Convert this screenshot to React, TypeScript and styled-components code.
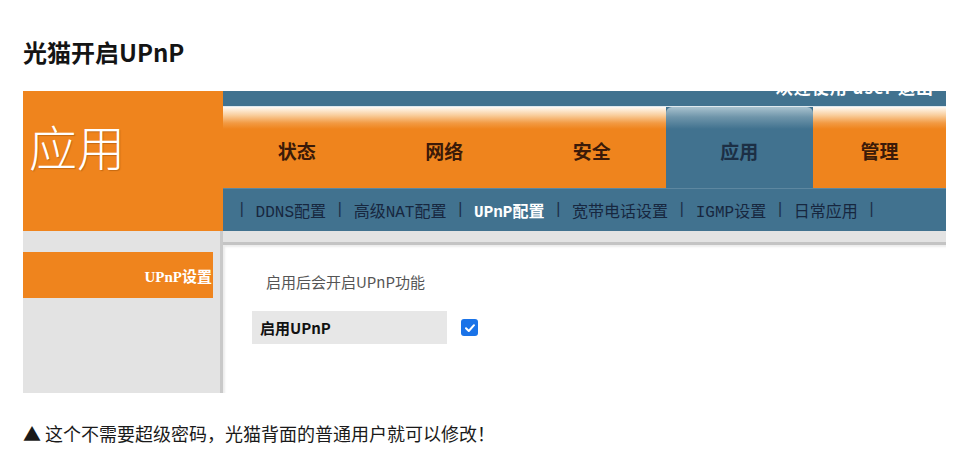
import React, {FC} from "react";
import styled, {createGlobalStyle} from "styled-components";

const GlobalStyle = createGlobalStyle`
  body {
    margin: 0;
    background: #ffffff;
    font-family: "Noto Sans", "Noto Sans CJK SC", sans-serif;
    color: #111;
  }
`

const ORANGE = "#ef841d";
const BLUE = "#41728f";

const Page = styled.div`
  width: 976px;
  height: 473px;
  padding: 37px 30px 0 23px;
  box-sizing: border-box;
`

const Title = styled.h2`
  margin: 0;
  height: 54px;
  font-size: 24px;
  line-height: 30px;
  font-weight: 700;
  font-family: "Noto Sans CJK SC", sans-serif;
  color: #141414;
`

const Frame = styled.div`
  width: 923px;
  height: 302px;
  display: grid;
  grid-template-columns: 200px 1fr;
  grid-template-rows: 140px 1fr;
  overflow: hidden;
`

const Brand = styled.div`
  background: ${ORANGE};
  color: #fff;
  font-family: "Noto Sans CJK SC", serif;
  font-weight: 300;
  font-size: 48px;
  line-height: 48px;
  padding: 30px 0 0 6px;
  text-shadow: 1px 1px 1px rgba(120, 60, 0, 0.35);
`

const Header = styled.div`
  display: flex;
  flex-direction: column;
  background: ${BLUE};
`

const TopStrip = styled.div`
  height: 15px;
  overflow: hidden;
  display: flex;
  justify-content: flex-end;
  padding-right: 12px;
  border-bottom: 1px solid #dfe9ee;
`

const TopText = styled.span`
  margin-top: -14px;
  color: #fff;
  font-weight: 700;
  font-size: 17px;
  line-height: 20px;
  letter-spacing: 1px;
  font-family: "Noto Sans CJK SC", sans-serif;
`

const Tabs = styled.div`
  height: 82px;
  display: grid;
  grid-template-columns: repeat(4, 147.5px) 1fr;
`

const Tab = styled.div<{ $active?: boolean }>`
  display: flex;
  align-items: center;
  justify-content: center;
  padding-top: 6px;
  font-size: 19px;
  font-weight: 700;
  font-family: "Noto Sans CJK SC", serif;
  color: ${p => (p.$active ? "#1c2f45" : "#3b1a08")};
  border-radius: ${p => (p.$active ? "6px 6px 0 0" : "0")};
  background: ${p =>
    p.$active
      ? `linear-gradient(to bottom, #a9c2cf 0px, #6f95aa 10px, ${BLUE} 22px, ${BLUE} 100%)`
      : `linear-gradient(to bottom, #fffaf3 0px, #f9cf9f 8px, #f29a43 16px, ${ORANGE} 22px, ${ORANGE} 100%)`};
`

const SubNav = styled.div`
  height: 42px;
  display: flex;
  align-items: center;
  gap: 9px;
  padding: 0 0 0 14px;
  border-top: 1px solid #5d87a0;
  font-family: "Liberation Mono", "Noto Sans CJK SC", monospace;
  font-size: 16px;
  color: #17273f;
`

const Sep = styled.span`
  color: #1d2f48;
`

const SubLink = styled.span<{ $current?: boolean }>`
  color: ${p => (p.$current ? "#ffffff" : "#17273f")};
  font-weight: ${p => (p.$current ? 700 : 400)};
`

const Sidebar = styled.div`
  background: #e3e3e3;
  padding-top: 21px;
  border-right: 3px solid #c9c9c9;
`

const SideItem = styled.div`
  height: 46px;
  width: 190px;
  background: ${ORANGE};
  color: #fff;
  font-weight: 700;
  font-size: 15px;
  font-family: "Liberation Serif", "Noto Sans CJK SC", serif;
  display: flex;
  align-items: center;
  justify-content: flex-end;
  padding-right: 1px;
  box-sizing: border-box;
`

const Body = styled.div`
  background: #e3e3e3;
  padding-top: 11px;
  display: flex;
`

const Content = styled.div`
  flex: 1;
  background: #fff;
  border-top: 3px solid #c4c4c4;
  box-shadow: inset 2px 2px 2px rgba(0, 0, 0, 0.08);
  padding: 27px 0 0 29px;
`

const Hint = styled.div`
  padding-left: 14px;
  font-size: 15px;
  line-height: 20px;
  color: #555;
  font-family: "Noto Sans CJK SC", sans-serif;
  margin-bottom: 19px;
`

const Row = styled.div`
  display: flex;
  align-items: center;
  gap: 14px;
`

const Label = styled.div`
  width: 195px;
  height: 33px;
  background: #e7e7e7;
  display: flex;
  align-items: center;
  padding-left: 8px;
  box-sizing: border-box;
  font-size: 15px;
  font-weight: 700;
  font-family: "Noto Sans CJK SC", sans-serif;
  color: #111;
`

const Check = styled.span`
  width: 17px;
  height: 17px;
  border-radius: 3px;
  background: #1a73e8;
  display: inline-flex;
  align-items: center;
  justify-content: center;
`

const Note = styled.p`
  margin: 28px 0 0;
  font-size: 18px;
  line-height: 24px;
  font-family: "Noto Sans CJK SC", sans-serif;
  color: #1a1a1a;
`

const tabs = ["状态", "网络", "安全", "应用", "管理"];
const links = ["DDNS配置", "高级NAT配置", "UPnP配置", "宽带电话设置", "IGMP设置", "日常应用"];

const App: FC = () => {
    return (
        <React.Fragment>
            <GlobalStyle/>
            <Page>
                <Title>光猫开启UPnP</Title>
                <Frame>
                    <Brand>应用</Brand>
                    <Header>
                        <TopStrip>
                            <TopText>欢迎使用 user 退出</TopText>
                        </TopStrip>
                        <Tabs>
                            {tabs.map(t => (
                                <Tab key={t} $active={t === "应用"}>{t}</Tab>
                            ))}
                        </Tabs>
                        <SubNav>
                            <Sep>|</Sep>
                            {links.map(l => (
                                <React.Fragment key={l}>
                                    <SubLink $current={l === "UPnP配置"}>{l}</SubLink>
                                    <Sep>|</Sep>
                                </React.Fragment>
                            ))}
                        </SubNav>
                    </Header>
                    <Sidebar>
                        <SideItem>UPnP设置</SideItem>
                    </Sidebar>
                    <Body>
                        <Content>
                            <Hint>启用后会开启UPnP功能</Hint>
                            <Row>
                                <Label>启用UPnP</Label>
                                <Check>
                                    <svg width="12" height="12" viewBox="0 0 12 12">
                                        <path d="M2 6.2 L4.8 9 L10 3.2" fill="none" stroke="#fff" strokeWidth="2"
                                              strokeLinecap="round" strokeLinejoin="round"/>
                                    </svg>
                                </Check>
                            </Row>
                        </Content>
                    </Body>
                </Frame>
                <Note>▲ 这个不需要超级密码，光猫背面的普通用户就可以修改！</Note>
            </Page>
        </React.Fragment>
    )
}

export default App;
